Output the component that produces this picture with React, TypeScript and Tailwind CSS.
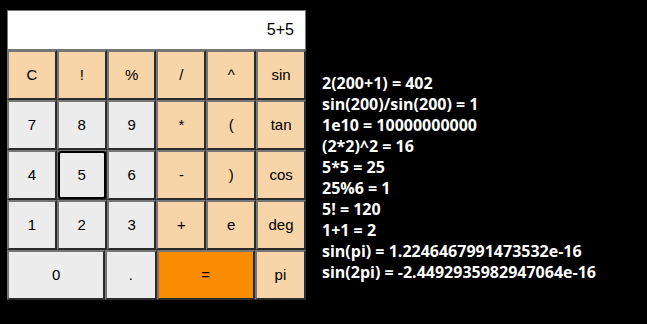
import React from "react";

const rows: { label: string; kind: "n" | "o" | "eq"; span?: number; focus?: boolean }[][] = [
  [
    { label: "C", kind: "o" },
    { label: "!", kind: "o" },
    { label: "%", kind: "o" },
    { label: "/", kind: "o" },
    { label: "^", kind: "o" },
    { label: "sin", kind: "o" },
  ],
  [
    { label: "7", kind: "n" },
    { label: "8", kind: "n" },
    { label: "9", kind: "n" },
    { label: "*", kind: "o" },
    { label: "(", kind: "o" },
    { label: "tan", kind: "o" },
  ],
  [
    { label: "4", kind: "n" },
    { label: "5", kind: "n", focus: true },
    { label: "6", kind: "n" },
    { label: "-", kind: "o" },
    { label: ")", kind: "o" },
    { label: "cos", kind: "o" },
  ],
  [
    { label: "1", kind: "n" },
    { label: "2", kind: "n" },
    { label: "3", kind: "n" },
    { label: "+", kind: "o" },
    { label: "e", kind: "o" },
    { label: "deg", kind: "o" },
  ],
  [
    { label: "0", kind: "n", span: 2 },
    { label: ".", kind: "n" },
    { label: "=", kind: "eq", span: 2 },
    { label: "pi", kind: "o" },
  ],
];

const history = [
  "2(200+1) = 402",
  "sin(200)/sin(200) = 1",
  "1e10 = 10000000000",
  "(2*2)^2 = 16",
  "5*5 = 25",
  "25%6 = 1",
  "5! = 120",
  "1+1 = 2",
  "sin(pi) = 1.2246467991473532e-16",
  "sin(2pi) = -2.4492935982947064e-16",
];

export default function App() {
  return (
    <div className="w-[647px] h-[324px] bg-black flex flex-row overflow-hidden">
      <div className="ml-[7px] mt-[10px] w-[299px] flex flex-col">
        <div
          className="h-[40px] bg-white border border-[#767676] flex items-center justify-end pr-[11px] text-[16px] text-black"
          style={{ fontFamily: '"Liberation Sans", Arial, sans-serif' }}
        >
          5+5
        </div>
        {rows.map((row, ri) => (
          <div key={ri} className="flex flex-row h-[50px]">
            {row.map((b, bi) => {
              const bg =
                b.kind === "n"
                  ? "bg-[#ececec]"
                  : b.kind === "o"
                  ? "bg-[#f7d5a8]"
                  : "bg-[#f98c00]";
              const w = b.span === 2 ? "flex-[2]" : "flex-1";
              return (
                <div
                  key={bi}
                  className={`${w} ${bg} relative border-2 border-t-[#767676] border-l-[#767676] border-b-[#2b2b2b] border-r-[#2b2b2b] flex items-center justify-center text-[15px] text-black`}
                  style={{ fontFamily: '"Liberation Sans", Arial, sans-serif' }}
                >
                  {b.focus && (
                    <div className="absolute inset-[-1px] rounded-[3px] border-2 border-black" />
                  )}
                  <span className="relative">{b.label}</span>
                </div>
              );
            })}
          </div>
        ))}
      </div>
      <div
        className="ml-[16px] mt-[73px] flex flex-col text-white font-bold text-[16px] leading-[21px]"
        style={{ fontFamily: '"Open Sans", "Noto Sans", sans-serif' }}
      >
        {history.map((h, i) => (
          <div key={i} className="whitespace-nowrap">
            {h}
          </div>
        ))}
      </div>
    </div>
  );
}
